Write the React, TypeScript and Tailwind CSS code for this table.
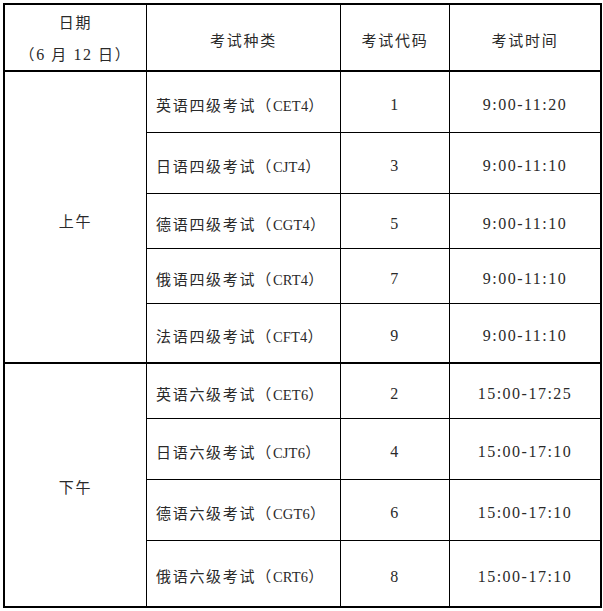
import React from "react";

const cjk = '"Noto Sans CJK SC", "Noto Sans", sans-serif';
const serif = '"Liberation Serif", "Noto Sans CJK SC", serif';

function Zh({ children }: { children: React.ReactNode }) {
  return (
    <span className="text-[15px] tracking-[1.7px]" style={{ fontFamily: cjk }}>
      {children}
    </span>
  );
}
function Num({ children }: { children: React.ReactNode }) {
  return (
    <span className="text-[16px] tracking-[1.5px]" style={{ fontFamily: serif }}>
      {children}
    </span>
  );
}
function Code({ children }: { children: React.ReactNode }) {
  return (
    <span className="text-[14.5px] tracking-[0.2px]" style={{ fontFamily: serif }}>
      {children}
    </span>
  );
}

type Row = { zh: string; code: string; num: string; time: string; h: string; last?: boolean };

function ExamName({ zh, code }: { zh: string; code: string }) {
  return (
    <span className="whitespace-nowrap">
      <Zh>{zh}（</Zh>
      <Code>{code}</Code>
      <Zh>）</Zh>
    </span>
  );
}

function DataRow({ r }: { r: Row }) {
  return (
    <div className={`flex ${r.h} ${r.last ? "" : "border-b border-black"}`}>
      <div className="w-[194px] border-r border-black flex items-center pl-[9px] pt-[6px]">
        <ExamName zh={r.zh} code={r.code} />
      </div>
      <div className="w-[109px] border-r border-black flex items-center justify-center pt-[6px]">
        <Num>{r.num}</Num>
      </div>
      <div className="w-[150px] flex items-center justify-center pt-[6px]">
        <Num>{r.time}</Num>
      </div>
    </div>
  );
}

const morning: Row[] = [
  { zh: "英语四级考试", code: "CET4", num: "1", time: "9:00-11:20", h: "h-[61px]" },
  { zh: "日语四级考试", code: "CJT4", num: "3", time: "9:00-11:10", h: "h-[61px]" },
  { zh: "德语四级考试", code: "CGT4", num: "5", time: "9:00-11:10", h: "h-[55px]" },
  { zh: "俄语四级考试", code: "CRT4", num: "7", time: "9:00-11:10", h: "h-[55px]" },
  { zh: "法语四级考试", code: "CFT4", num: "9", time: "9:00-11:10", h: "h-[58px]", last: true },
];

const afternoon: Row[] = [
  { zh: "英语六级考试", code: "CET6", num: "2", time: "15:00-17:25", h: "h-[55px]" },
  { zh: "日语六级考试", code: "CJT6", num: "4", time: "15:00-17:10", h: "h-[61px]" },
  { zh: "德语六级考试", code: "CGT6", num: "6", time: "15:00-17:10", h: "h-[61px]" },
  { zh: "俄语六级考试", code: "CRT6", num: "8", time: "15:00-17:10", h: "h-[65px]", last: true },
];

export default function App() {
  return (
    <div className="w-[603px] h-[611px] bg-white text-[#2a2a2a] pt-[3px] pl-[3px]">
      <div className="w-[599px] border-2 border-black flex flex-col">
        {/* header */}
        <div className="flex h-[67px] border-b-2 border-black">
          <div className="w-[142px] border-r border-black flex flex-col items-center justify-center pt-[2px] leading-[32px]">
            <div>
              <Zh>日期</Zh>
            </div>
            <div className="whitespace-nowrap">
              <Zh>（</Zh>
              <Num>6 </Num>
              <Zh>月</Zh>
              <Num> 12 </Num>
              <Zh>日）</Zh>
            </div>
          </div>
          <div className="w-[194px] border-r border-black flex items-center justify-center pt-[6px]">
            <Zh>考试种类</Zh>
          </div>
          <div className="w-[109px] border-r border-black flex items-center justify-center pt-[6px]">
            <Zh>考试代码</Zh>
          </div>
          <div className="w-[150px] flex items-center justify-center pt-[6px]">
            <Zh>考试时间</Zh>
          </div>
        </div>
        {/* morning */}
        <div className="flex border-b-2 border-black">
          <div className="w-[142px] border-r border-black flex items-center justify-center pt-[8px]">
            <Zh>上午</Zh>
          </div>
          <div className="flex flex-col">
            {morning.map((r) => (
              <DataRow key={r.code} r={r} />
            ))}
          </div>
        </div>
        {/* afternoon */}
        <div className="flex">
          <div className="w-[142px] border-r border-black flex items-center justify-center pt-[4px]">
            <Zh>下午</Zh>
          </div>
          <div className="flex flex-col">
            {afternoon.map((r) => (
              <DataRow key={r.code} r={r} />
            ))}
          </div>
        </div>
      </div>
    </div>
  );
}
